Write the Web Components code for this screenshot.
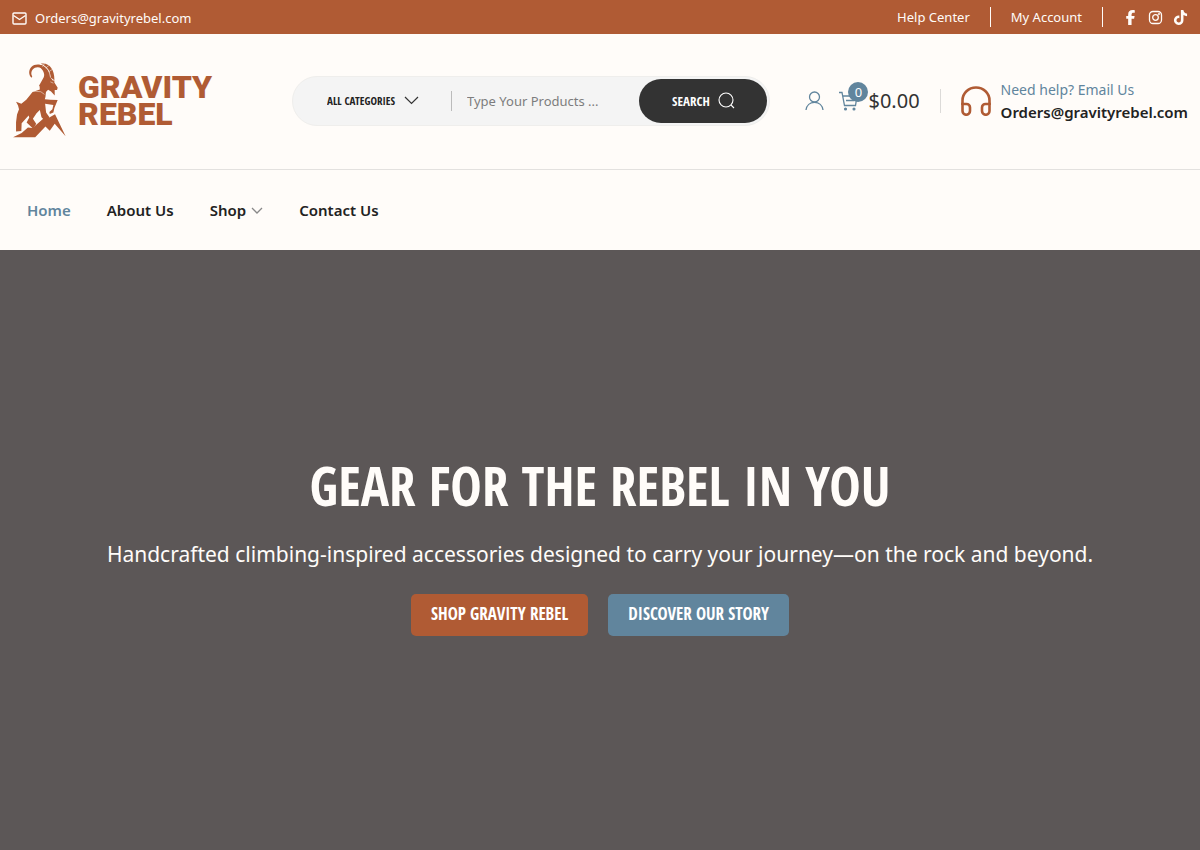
<!DOCTYPE html>
<html lang="en">
<head>
  <meta charset="utf-8">
  <meta name="viewport" content="width=device-width, initial-scale=1">
  <title>Gravity Rebel</title>
  <style>
    :root {
      --rust: #b05b34;
      --blue: #61859d;
      --cream: #fffcf9;
      --ink: #222;
      --stone: #5c5757;
      --display: "Open Sans Condensed", "Roboto Condensed", sans-serif;
    }

    body {
      margin: 0;
      background: var(--cream);
      color: var(--ink);
      font-family: "Noto Sans", sans-serif;
    }
  </style>
</head>
<body>
  <top-bar></top-bar>
  <site-header>
    <brand-logo slot="logo"></brand-logo>
    <product-search slot="search"></product-search>
    <account-tools slot="tools"></account-tools>
    <help-contact slot="help"></help-contact>
  </site-header>
  <main-nav></main-nav>
  <hero-banner>
    <span slot="title">GEAR FOR THE REBEL IN YOU</span>
    <span slot="text">Handcrafted climbing-inspired accessories designed to carry your journey—on the rock and beyond.</span>
    <hero-button slot="actions" href="#shop">SHOP GRAVITY REBEL</hero-button>
    <hero-button slot="actions" href="#story" class="blue">DISCOVER OUR STORY</hero-button>
  </hero-banner>

  <script>
    class TopBar extends HTMLElement {
      constructor() {
        super();
        this.attachShadow({ mode: 'open' });
      }

      connectedCallback() {
        this.shadowRoot.innerHTML = `
          <style>
            :host {
              display: flex;
              align-items: center;
              justify-content: space-between;
              height: 34px;
              padding: 0 12px;
              background: var(--rust);
              color: var(--cream);
              font-size: 13px;
              line-height: 20px;
            }

            a {
              color: inherit;
              text-decoration: none;
            }

            svg {
              display: block;
            }

            .mail {
              display: flex;
              align-items: center;
              gap: 8px;
              padding-top: 2px;
            }

            nav {
              display: flex;
              align-items: center;
            }

            .link {
              padding: 0 20px;
              border-right: 1px solid var(--cream);
            }

            .social {
              display: flex;
              gap: 10px;
              padding-left: 20px;
            }
          </style>
          <a class="mail" href="mailto:Orders@gravityrebel.com">
            <svg width="15" height="15" viewBox="0 0 15 15" fill="none" stroke="currentColor" stroke-width="1.4">
              <rect x="1" y="2" width="13" height="11" rx="1"/>
              <path d="M1.5 4.5l6 4 6-4"/>
            </svg>
            Orders@gravityrebel.com
          </a>
          <nav aria-label="Account">
            <a class="link" href="#help">Help Center</a>
            <a class="link" href="#account">My Account</a>
            <div class="social">
              <a href="#facebook" aria-label="Facebook">
                <svg width="15" height="15" viewBox="0 0 320 512" fill="currentColor">
                  <path d="M80 299.3V512h116V299.3h86.5l18-97.8H196v-34.6c0-51.7 20.3-71.5 72.7-71.5 16.3 0 29.4.4 37 1.2V7.9C291.4 4 256.4 0 236.2 0 129.3 0 80 50.5 80 159.4v42.1H14v97.8h66z"/>
                </svg>
              </a>
              <a href="#instagram" aria-label="Instagram">
                <svg width="15" height="15" viewBox="0 0 15 15" fill="none" stroke="currentColor" stroke-width="1.3">
                  <rect x="1.5" y="1.5" width="12" height="12" rx="3.5"/>
                  <circle cx="7.5" cy="7.5" r="2.8"/>
                  <circle cx="11" cy="4" r=".4"/>
                </svg>
              </a>
              <a href="#tiktok" aria-label="TikTok">
                <svg width="15" height="15" viewBox="0 0 448 512" fill="currentColor">
                  <path d="M448 209.9a210.1 210.1 0 0 1-122.8-39.3v178.8A162.6 162.6 0 1 1 185 188.3v89.9a74.6 74.6 0 1 0 52.2 71.2V0h88a121.2 121.2 0 0 0 1.9 22.2 122.2 122.2 0 0 0 53.9 80.2 121.4 121.4 0 0 0 67 20.1z"/>
                </svg>
              </a>
            </div>
          </nav>
        `;
      }
    }

    class SiteHeader extends HTMLElement {
      constructor() {
        super();
        this.attachShadow({ mode: 'open' });
      }

      connectedCallback() {
        this.shadowRoot.innerHTML = `
          <style>
            :host {
              display: block;
              border-bottom: 1px solid #e3e1df;
            }

            header {
              display: flex;
              align-items: center;
              padding: 29px 12px 31px;
            }

            ::slotted(*) {
              flex: none;
            }

            ::slotted(product-search) {
              flex: 1;
              min-width: 0;
              margin: 0 35px 0 80px;
            }

            ::slotted(help-contact) {
              margin-left: 20px;
            }
          </style>
          <header>
            <slot name="logo"></slot>
            <slot name="search"></slot>
            <slot name="tools"></slot>
            <slot name="help"></slot>
          </header>
        `;
      }
    }

    class BrandLogo extends HTMLElement {
      constructor() {
        super();
        this.attachShadow({ mode: 'open' });
      }

      connectedCallback() {
        this.shadowRoot.innerHTML = `
          <style>
            :host {
              display: block;
              width: 200px;
            }

            a {
              display: flex;
              align-items: center;
              gap: 11px;
              color: var(--rust);
              text-decoration: none;
              font: 900 32px/27px Roboto, sans-serif;
            }

            svg {
              flex: none;
            }
          </style>
          <a href="#home">
            <svg width="55" height="75" viewBox="36 41 164 227" fill="currentColor" aria-hidden="true">
              <!-- horns -->
              <path d="M94 86C85 78 84 61 94 52C102 44 118 43 130 50L126 57C114 52 104 53 98 60C92 67 92 76 96 82Z"/>
              <path d="M110 48C126 44 141 54 148 72L150 86L131 84C136 72 126 57 110 48Z"/>
              <path d="M122 43C147 38 164 60 163 93L152 85C151 66 143 51 122 43Z"/>
              <!-- head and beard -->
              <path d="M133 80L151 84L158 94L163 94L163 100L173 116L171 123L164 123L164 139L153 127L144 122L136 130L117 109Z"/>
              <!-- body, hind and front legs -->
              <path d="M118 107L138 124L136 144L134 151L151 152L173 153L163 177L160 191L149 195L148 189L157 181L160 168L135 164L138 191L148 205L137 218L124 205L119 183L109 193L98 210L108 225L99 240L79 221L87 206L85 200L64 223L63 247L47 248L47 220L50 197L56 181L53 170L47 158L63 164L78 152L97 129L119 121Z"/>
              <!-- rock -->
              <path d="M38 266L64 253L83 236L97 238L130 209L141 210L165 196L197 263L164 225L149 246L136 233L105 266Z"/>
              <g fill="none" stroke="var(--cream)" stroke-width="1.5">
                <path d="M99 126L122 128L133 136M133 43L127 52M146 49L137 56M156 61L145 68M151 98L160 102"/>
              </g>
            </svg>
            <span>GRAVITY<br>REBEL</span>
          </a>
        `;
      }
    }

    class ProductSearch extends HTMLElement {
      constructor() {
        super();
        this.attachShadow({ mode: 'open' });
      }

      connectedCallback() {
        this.shadowRoot.innerHTML = `
          <style>
            :host {
              display: block;
            }

            form {
              display: flex;
              align-items: center;
              padding: 2px 2px 2px 34px;
              border: 1px solid #efeeec;
              border-radius: 25px;
              background: #f4f4f4;
            }

            .category {
              display: grid;
              flex: none;
              align-items: center;
              width: 92px;
              margin-right: 32px;
            }

            select,
            .category svg {
              grid-area: 1 / 1;
            }

            .category svg {
              justify-self: end;
              pointer-events: none;
            }

            select {
              appearance: none;
              width: 100%;
              padding: 0;
              border: 0;
              background: none;
              color: var(--ink);
              font: 700 11px/20px var(--display);
            }

            input {
              flex: 1;
              min-width: 0;
              height: 20px;
              padding: 0 15px;
              border: 0;
              border-left: 1px solid #bbb;
              background: none;
              font: 13px/20px "Noto Sans", sans-serif;
            }

            input::placeholder {
              color: #7d7d7d;
            }

            button {
              display: flex;
              flex: none;
              align-items: center;
              justify-content: center;
              gap: 8px;
              width: 128px;
              height: 44px;
              padding: 0;
              border: 0;
              border-radius: 22px;
              background: #333;
              color: #fff;
              font: 700 13px/20px var(--display);
            }
          </style>
          <form role="search">
            <div class="category">
              <select aria-label="Category">
                <option>ALL CATEGORIES</option>
              </select>
              <svg width="15" height="9" viewBox="0 0 15 9" fill="none" stroke="#333" stroke-width="1.2">
                <path d="M1 1l6.5 6.5L14 1"/>
              </svg>
            </div>
            <input type="text" aria-label="Search products" placeholder="Type Your Products ...">
            <button type="button">
              SEARCH
              <svg width="17" height="17" viewBox="0 0 17 17" fill="none" stroke="currentColor" stroke-width="1.1">
                <circle cx="8" cy="8" r="7"/>
                <path d="M13 13l3 3"/>
              </svg>
            </button>
          </form>
        `;
      }
    }

    class AccountTools extends HTMLElement {
      constructor() {
        super();
        this.attachShadow({ mode: 'open' });
      }

      connectedCallback() {
        this.shadowRoot.innerHTML = `
          <style>
            :host {
              display: flex;
              align-items: center;
              color: var(--blue);
            }

            a {
              color: inherit;
              text-decoration: none;
            }

            svg {
              display: block;
            }

            .cart {
              display: flex;
              align-items: center;
              gap: 10px;
              margin-left: 15px;
              padding-right: 20px;
            }

            .icon {
              position: relative;
            }

            .count {
              position: absolute;
              top: -9px;
              left: 9px;
              width: 20px;
              height: 20px;
              border-radius: 50%;
              background: var(--blue);
              color: #fff;
              font-size: 13px;
              line-height: 20px;
              text-align: center;
            }

            .total {
              color: #333;
              font-size: 20px;
              line-height: 24px;
            }

            .rule {
              width: 1px;
              height: 24px;
              background: #dcdad8;
            }
          </style>
          <a href="#account" aria-label="My account">
            <svg width="19" height="20" viewBox="0 0 19 20" fill="none" stroke="currentColor" stroke-width="1.3">
              <circle cx="9.5" cy="6" r="5"/>
              <path d="M1 19c.6-4.6 4-7.6 8.5-7.6s7.9 3 8.5 7.6"/>
            </svg>
          </a>
          <a class="cart" href="#cart">
            <span class="icon">
              <svg width="19" height="20" viewBox="0 0 19 20" fill="none" stroke="currentColor" stroke-width="1.3">
                <path d="M0 1.5h3l2.5 13h11L18 5H4M7 9.5h8"/>
                <circle cx="6.5" cy="18" r=".9" fill="currentColor"/>
                <circle cx="15" cy="18" r=".9" fill="currentColor"/>
              </svg>
              <span class="count">0</span>
            </span>
            <span class="total">$0.00</span>
          </a>
          <span class="rule"></span>
        `;
      }
    }

    class HelpContact extends HTMLElement {
      constructor() {
        super();
        this.attachShadow({ mode: 'open' });
      }

      connectedCallback() {
        this.shadowRoot.innerHTML = `
          <style>
            :host {
              display: block;
            }

            a {
              display: flex;
              align-items: center;
              gap: 10px;
              color: var(--ink);
              font-size: 15px;
              line-height: 22px;
              text-decoration: none;
              white-space: nowrap;
            }

            svg {
              flex: none;
              color: var(--rust);
            }

            small,
            strong {
              display: block;
            }

            small {
              color: var(--blue);
              font-size: 14px;
            }

            strong {
              font-weight: 600;
            }
          </style>
          <a href="mailto:Orders@gravityrebel.com">
            <svg width="30" height="30" viewBox="0 0 30 30" fill="none" stroke="currentColor" stroke-width="2.6">
              <path d="M1.5 19v-4.5a13.5 13 0 0 1 27 0V19"/>
              <path d="M1.5 18h4a3.5 3.5 0 0 1 3.5 3.5V25a3.5 3.5 0 0 1-7.5 0zM28.5 18h-4a3.5 3.5 0 0 0-3.5 3.5V25a3.5 3.5 0 0 0 7.5 0z"/>
            </svg>
            <span>
              <small>Need help? Email Us</small>
              <strong>Orders@gravityrebel.com</strong>
            </span>
          </a>
        `;
      }
    }

    class MainNav extends HTMLElement {
      constructor() {
        super();
        this.attachShadow({ mode: 'open' });
      }

      connectedCallback() {
        this.shadowRoot.innerHTML = `
          <style>
            :host {
              display: block;
            }

            nav {
              display: flex;
              align-items: center;
              gap: 36px;
              padding: 28px 27px;
              font-size: 15px;
              font-weight: 600;
              line-height: 24px;
            }

            a {
              display: flex;
              align-items: center;
              gap: 5px;
              color: var(--ink);
              text-decoration: none;
            }

            a[aria-current] {
              color: var(--blue);
            }
          </style>
          <nav aria-label="Main">
            <a href="#home" aria-current="page">Home</a>
            <a href="#about">About Us</a>
            <a href="#shop">Shop
              <svg width="12" height="7" viewBox="0 0 12 7" fill="none" stroke="#888" stroke-width="1.3">
                <path d="M1 1l5 5 5-5"/>
              </svg>
            </a>
            <a href="#contact">Contact Us</a>
          </nav>
        `;
      }
    }

    class HeroBanner extends HTMLElement {
      constructor() {
        super();
        this.attachShadow({ mode: 'open' });
      }

      connectedCallback() {
        this.shadowRoot.innerHTML = `
          <style>
            :host {
              display: flex;
              flex-direction: column;
              align-items: center;
              justify-content: center;
              box-sizing: border-box;
              min-height: 600px;
              padding: 20px 20px 34px;
              background: var(--stone);
              color: var(--cream);
              text-align: center;
            }

            h1 {
              margin: 0;
              font: 700 53px/72px var(--display);
            }

            p {
              margin: 16px 0 24px;
              font-size: 21px;
              line-height: 32px;
            }

            .actions {
              display: flex;
              flex-wrap: wrap;
              justify-content: center;
              gap: 20px;
            }
          </style>
          <h1><slot name="title"></slot></h1>
          <p><slot name="text"></slot></p>
          <div class="actions"><slot name="actions"></slot></div>
        `;
      }
    }

    class HeroButton extends HTMLElement {
      constructor() {
        super();
        this.attachShadow({ mode: 'open' });
      }

      connectedCallback() {
        const href = this.getAttribute('href') || '#';

        this.shadowRoot.innerHTML = `
          <style>
            :host {
              display: block;
              --fill: var(--rust);
            }

            :host(.blue) {
              --fill: var(--blue);
            }

            a {
              display: block;
              padding: 8px 20px 10px;
              border-radius: 5px;
              background: var(--fill);
              color: #fff;
              font: 700 17px/24px var(--display);
              text-decoration: none;
            }
          </style>
          <a href="${href}"><slot></slot></a>
        `;
      }
    }

    customElements.define('top-bar', TopBar);
    customElements.define('site-header', SiteHeader);
    customElements.define('brand-logo', BrandLogo);
    customElements.define('product-search', ProductSearch);
    customElements.define('account-tools', AccountTools);
    customElements.define('help-contact', HelpContact);
    customElements.define('main-nav', MainNav);
    customElements.define('hero-banner', HeroBanner);
    customElements.define('hero-button', HeroButton);
  </script>
</body>
</html>
